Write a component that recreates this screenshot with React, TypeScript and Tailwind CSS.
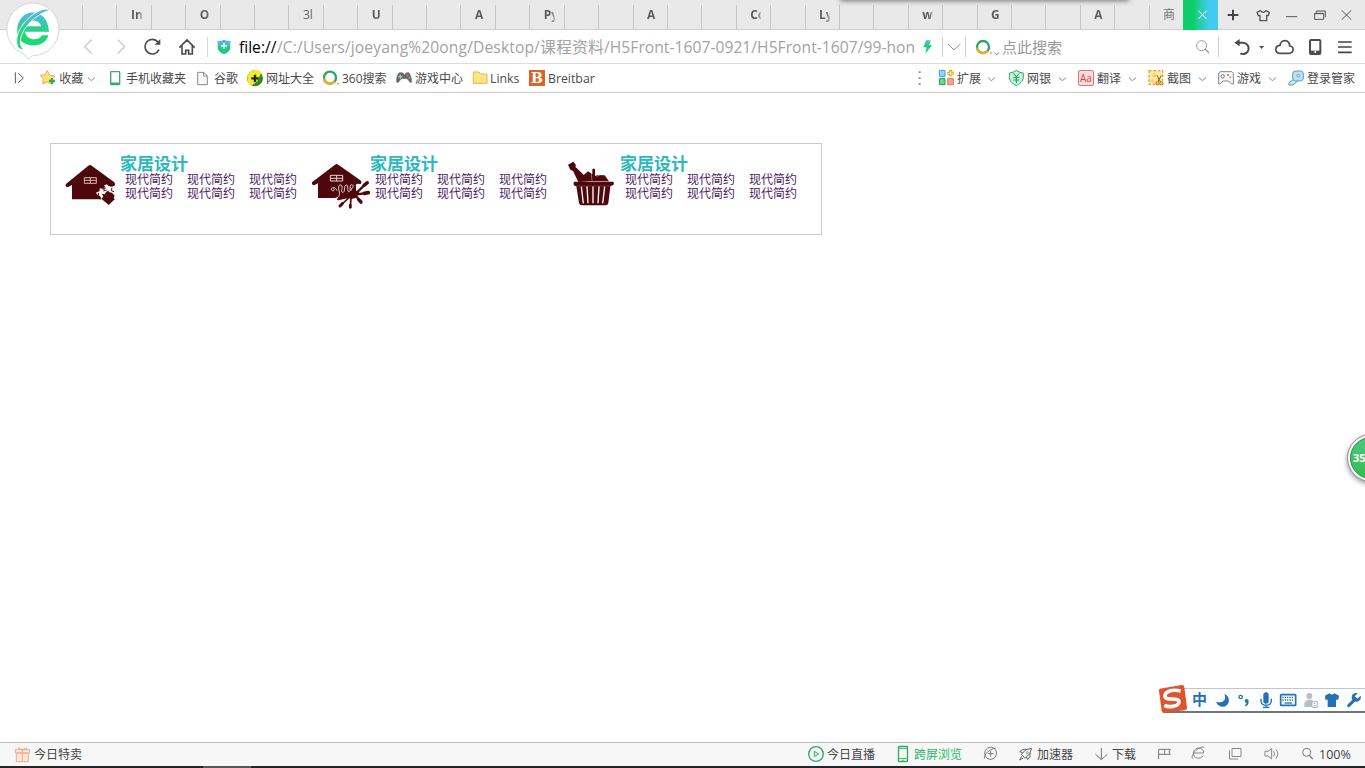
import React from "react";

type ArtProps = { x: number; y: number; w: number; h: number; children: React.ReactNode };

// Artwork is drawn on a grid three times finer than the page.
function Art({ x, y, w, h, children }: ArtProps) {
  return (
    <svg
      className="block shrink-0"
      width={w / 3}
      height={h / 3}
      viewBox={`${x} ${y} ${w} ${h}`}
      fill="none"
      strokeWidth={4}
    >
      {children}
    </svg>
  );
}

const tabLabels: Record<number, string> = {
  1: "In", 3: "O", 6: "3l", 8: "U", 11: "A", 13: "Py", 16: "A",
  19: "Co", 21: "Ly", 24: "w", 26: "G", 29: "A", 31: "商",
};

function TabStrip() {
  return (
    <div className="flex h-[30px] shrink-0 border-b border-[#cfcfcf] bg-[#e9e9e9] pl-[82px]">
      <div className="flex w-[1101px] shrink-0 pt-[5px]">
        {Array.from({ length: 32 }, (_, i) => (
          <div key={i} className="flex min-w-0 flex-1 border-l border-[#c6c6c6] pl-[13.5px]">
            <span
              className={
                i === 31
                  ? "w-[11px] overflow-hidden text-[12px] leading-[20px] whitespace-nowrap text-[#777]"
                  : i === 6
                    ? "w-[10px] overflow-hidden text-[12px] leading-[20px] whitespace-nowrap text-[#666]"
                    : "w-[11px] overflow-hidden bg-linear-to-r from-[#5a5a5a] from-60% to-[#bbb] bg-clip-text text-[12px] leading-[20px] font-bold whitespace-nowrap text-transparent"
              }
            >
              {tabLabels[i] ?? ""}
            </span>
          </div>
        ))}
      </div>
      <div className="h-[30px] w-[35px] shrink-0 bg-linear-to-r from-[#0dcd6b] from-30% to-[#41cbf0] to-75%">
        <Art x={489} y={0} w={105} h={90}>
          <path d="M535 32l25 25M560 32l-25 25" stroke="#fff" strokeWidth={3} />
        </Art>
      </div>
      <Art x={594} y={0} w={88} h={90}>
        <path d="M623 45h32M639 29v32" stroke="#444" strokeWidth={6} />
      </Art>
      <Art x={682} y={0} w={96} h={90}>
        <path d="M712 37l10-5c5 7 12 7 17 0l10 5-3 10-5-1v16h-20V46l-5 1z" stroke="#555" strokeLinejoin="round" />
      </Art>
      <Art x={778} y={0} w={80} h={90}>
        <path d="M799 50h34" stroke="#555" strokeWidth={3} />
      </Art>
      <Art x={858} y={0} w={82} h={90}>
        <path d="M884 40h27v18h-27zM884 41h27M889 38v-5h27v19" stroke="#555" strokeWidth={3} />
      </Art>
      <Art x={940} y={0} w={95} h={90}>
        <path d="M966 31l29 28M995 31l-29 28" stroke="#555" strokeWidth={3} />
      </Art>
    </div>
  );
}

function Ring({ cx, cy, r }: { cx: number; cy: number; r: number }) {
  return (
    <>
      <circle cx={cx} cy={cy} r={r} stroke="#2ba567" strokeWidth={7} />
      <path
        d={`M${cx - r} ${cy + 2}A${r} ${r} 0 0 0 ${cx + r * 0.8} ${cy + r * 0.6}`}
        stroke="#f0aa2c"
        strokeWidth={7}
      />
      <circle cx={cx + r + 6} cy={cy + r} r={3} fill="#f0aa2c" />
    </>
  );
}

function NavBar() {
  return (
    <div className="flex h-[34px] shrink-0 border-b border-[#dcdcdc] bg-white">
      <div className="w-[72px] shrink-0" />
      <Art x={216} y={90} w={96} h={99}>
        <path d="M275 119l-21 21 21 21" stroke="#d3d3d3" strokeWidth={5} />
      </Art>
      <Art x={312} y={90} w={99} h={99}>
        <path d="M353 119l21 21-21 21" stroke="#d3d3d3" strokeWidth={5} />
      </Art>
      <Art x={411} y={90} w={96} h={99}>
        <path d="M477 149a22 22 0 1 1-3-23" stroke="#4c4c4c" strokeWidth={5} />
        <path d="M481 117v17h-17z" fill="#4c4c4c" />
      </Art>
      <Art x={507} y={90} w={114} h={99}>
        <path d="M538 143l23-23 23 23M546 138v24h11v-11h9v11h11v-24" stroke="#4c4c4c" strokeWidth={5} />
      </Art>
      <div className="mt-[7px] h-5 w-px shrink-0 bg-[#d8d8d8]" />
      <Art x={624} y={90} w={93} h={99}>
        <defs>
          <linearGradient id="shield" x1="0" y1="0" x2="0" y2="1">
            <stop offset="0.2" stopColor="#51bce0" />
            <stop offset="0.6" stopColor="#1dcb78" />
          </linearGradient>
        </defs>
        <path d="M653 123q9 1 19-4 10 5 19 4v22q-2 11-19 18-17-7-19-18z" fill="url(#shield)" />
        <path d="M663 138h18M672 129v18" stroke="#fff" strokeWidth={5} />
      </Art>
      <div className="flex w-[676px] shrink-0 overflow-hidden pt-px font-['Open_Sans','Noto_Sans_CJK_SC',sans-serif] text-[15.6px] leading-[33px] whitespace-nowrap text-[#a3a3a3]">
        <span className="w-[38px] shrink-0 text-black">file://</span>
        <span className="w-[263px] shrink-0 tracking-[0.13px]">/C:/Users/joeyang%20ong/Desktop/</span>
        <span className="w-[64px] shrink-0 text-[16px]">课程资料</span>
        <span className="tracking-[0.05px]">/H5Front-1607-0921/H5Front-1607/99-hon</span>
      </div>
      <Art x={705} y={90} w={81} h={99}>
        <defs>
          <linearGradient id="bolt" x1="0" y1="0" x2="0" y2="1">
            <stop offset="0.1" stopColor="#4bbbe7" />
            <stop offset="0.5" stopColor="#19cc6d" />
          </linearGradient>
        </defs>
        <path d="M738 121h14l-4 14h8l-20 26 4-19h-10z" fill="url(#bolt)" />
      </Art>
      <div className="mt-[7px] h-5 w-px shrink-0 bg-[#d0d0d0]" />
      <Art x={789} y={90} w={66} h={99}>
        <path d="M804 132l18 18 19-18" stroke="#999" strokeWidth={3} />
      </Art>
      <div className="mt-[7px] h-5 w-px shrink-0 bg-[#d0d0d0]" />
      <Art x={858} y={90} w={108} h={99}>
        <Ring cx={909} cy={141} r={18} />
        <path d="M943 158l7 6 8-6" stroke="#888" strokeWidth={3} />
      </Art>
      <span className="w-[188px] shrink-0 text-[15px] leading-[35px] text-[#999]">点此搜索</span>
      <Art x={510} y={90} w={84} h={99}>
        <circle cx={545} cy={137} r={15} stroke="#999" strokeWidth={3} />
        <path d="M555 147l12 12" stroke="#999" strokeWidth={4} />
      </Art>
      <div className="mt-[7px] h-5 w-px shrink-0 bg-[#d0d0d0]" />
      <Art x={597} y={90} w={108} h={99}>
        <path d="M649 128h20a17 17 0 1 1-8 32" stroke="#4c4c4c" strokeWidth={6} />
        <path d="M643 128l16-11v22z" fill="#4c4c4c" />
      </Art>
      <Art x={705} y={90} w={45} h={99}>
        <path d="M717 138h16l-8 9z" fill="#555" />
      </Art>
      <Art x={750} y={90} w={90} h={99}>
        <path d="M779 160h29c15-2 15-21 1-22 1-21-28-21-29-2-17 1-16 23-1 24z" stroke="#4c4c4c" strokeWidth={5} />
      </Art>
      <Art x={840} y={90} w={90} h={99}>
        <rect x={870} y={120} width={31} height={42} rx={3} stroke="#4c4c4c" strokeWidth={6} />
        <path d="M870 156h31" stroke="#4c4c4c" strokeWidth={8} />
        <circle cx={886} cy={156} r={3} fill="#fff" />
      </Art>
      <Art x={930} y={90} w={105} h={99}>
        <path d="M954 126h41M954 141h41M954 157h41" stroke="#444" strokeWidth={5} />
      </Art>
    </div>
  );
}

function Mark({ className, children, label }: { className: string; children: React.ReactNode; label: string }) {
  return (
    <div className={className}>
      {children}
      <span>{label}</span>
    </div>
  );
}

function Chevron() {
  return (
    <Art x={258} y={192} w={32} h={84}>
      <path d="M264 233l10 9 11-9" stroke="#888" strokeWidth={3} />
    </Art>
  );
}

function BookmarkBar() {
  return (
    <div className="flex h-[29px] shrink-0 border-b border-[#c8c8c8] bg-white text-[12px] leading-[29px] whitespace-nowrap text-[#4a4a4a]">
      <Art x={0} y={192} w={120} h={84}>
        <path d="M46 217v33M55 220l15 14-15 14" stroke="#555" strokeWidth={3} />
      </Art>
      <div className="flex w-[69px] shrink-0">
        <Art x={120} y={192} w={58} h={84}>
          <path d="M142 212l7 14 16 2-12 11 3 14-14-7-14 6 2-15-9-11 14-2z" fill="#fee078" stroke="#e6ad4e" strokeWidth={3} strokeLinejoin="round" />
          <path d="M147 243h18M156 234v18" stroke="#35a963" strokeWidth={7} />
        </Art>
        <span className="w-[27px]">收藏</span>
        <Chevron />
      </div>
      <Mark className="flex w-[87px] shrink-0" label="手机收藏夹">
        <Art x={327} y={192} w={51} h={84}>
          <rect x={332} y={215} width={27} height={39} rx={2} fill="#fff" stroke="#43a66d" strokeWidth={4} />
          <path d="M332 250h27" stroke="#43a66d" strokeWidth={5} />
        </Art>
      </Mark>
      <Mark className="flex w-[50px] shrink-0" label="谷歌">
        <Art x={588} y={192} w={54} h={84}>
          <path d="M593 217h18l11 11v26h-29zM611 217v11h11" fill="#fafafa" stroke="#888" strokeWidth={3} />
        </Art>
      </Mark>
      <Mark className="flex w-[76px] shrink-0" label="网址大全">
        <Art x={738} y={192} w={60} h={84}>
          <circle cx={765} cy={235} r={24} fill="#2f8a2c" />
          <path d="M742 236c0-28 32-33 42-18l-12 26-18 13c-8-3-12-11-12-21z" fill="#f3ea2a" />
          <path d="M754 235h22M765 224v22" stroke="#202b0e" strokeWidth={7} />
        </Art>
      </Mark>
      <Mark className="flex w-[73px] shrink-0" label="360搜索">
        <Art x={966} y={192} w={60} h={84}>
          <Ring cx={990} cy={233} r={18} />
        </Art>
      </Mark>
      <Mark className="flex w-[76px] shrink-0" label="游戏中心">
        <Art x={165} y={192} w={60} h={84}>
          <path d="M177 218h11l5 6 6-6h8c6 8 11 30 6 30-5 0-8-12-13-12h-14c-6 1-10 14-15 12-4-5 0-24 6-30z" fill="#666" stroke="#888" strokeWidth={2} />
          <path d="M175 230h12M181 224v12" stroke="#8fe0b4" />
          <circle cx={202} cy={226} r={4} fill="#db5757" />
          <circle cx={208} cy={233} r={3} fill="#5ac58c" />
        </Art>
      </Mark>
      <Mark className="flex w-[57px] shrink-0 font-['Open_Sans',sans-serif] text-[12.3px]" label="Links">
        <Art x={394} y={192} w={57} h={84}>
          <path d="M401 250v-34h17l5 6h19v28z" fill="#fee483" stroke="#deb94c" strokeWidth={3} />
        </Art>
      </Mark>
      <Mark className="flex w-[388px] shrink-0 pl-px font-['Open_Sans',sans-serif] text-[12.3px]" label="Breitbar">
        <div className="mt-[6px] mr-[3px] h-4 w-4 shrink-0 bg-[#dd6427] text-center font-['DejaVu_Serif',serif] text-[14px] leading-4 font-bold text-white">B</div>
      </Mark>
      <Art x={708} y={192} w={63} h={84}>
        <path d="M719 214v5M719 232v5M719 250v5" stroke="#888" strokeWidth={6} />
      </Art>
      <div className="flex w-[71px] shrink-0">
        <Art x={771} y={192} w={60} h={84}>
          <path d="M778 211h17v18h-17z" fill="#92d7ff" stroke="#4999cf" strokeWidth={3} />
          <path d="M778 236h17v18h-17z" fill="#65d991" stroke="#239c57" strokeWidth={3} />
          <path d="M803 236h17v18h-17z" fill="#f9a58d" stroke="#d87962" strokeWidth={3} />
          <path d="M802 220h19M812 210v19" stroke="#d8a025" strokeWidth={9} />
          <path d="M804 220h15M812 213v14" stroke="#ffe25f" strokeWidth={4} />
        </Art>
        <span className="w-[29px]">扩展</span>
        <Chevron />
      </div>
      <div className="flex w-[70px] shrink-0">
        <Art x={984} y={192} w={57} h={84}>
          <path d="M988 219q11 0 21-8 11 8 21 8v13c0 12-12 20-21 25-10-5-21-13-21-25z" fill="#c5f4da" stroke="#37a570" strokeWidth={3} />
          <path d="M1001 220l8 10 9-10M1009 230v19M1000 232h18M1000 240h18" stroke="#24945b" strokeWidth={3} />
        </Art>
        <span className="w-[30px]">网银</span>
        <Chevron />
      </div>
      <div className="flex w-[70px] shrink-0">
        <div className="mt-[6px] mr-[3px] h-4 w-4 rounded-[2px] border border-[#cd7979] bg-[#ffdbdb] text-center text-[10px] leading-[14px] text-[#cb4848]">Aa</div>
        <span className="w-[30px]">翻译</span>
        <Chevron />
      </div>
      <div className="flex w-[70px] shrink-0">
        <Art x={384} y={192} w={57} h={84}>
          <path d="M387 212h41v41h-41z" fill="#fee99f" stroke="#d8a343" strokeWidth={4} strokeDasharray="8 5" />
          <circle cx={403} cy={226} r={6} fill="#fcd168" />
          <circle cx={397} cy={243} r={5} fill="#fcd168" />
          <path d="M411 226l11 21M424 226l-11 21" stroke="#735c4e" strokeWidth={3} />
          <circle cx={412} cy={250} r={5} fill="#ffc44e" stroke="#c97a21" strokeWidth={3} />
          <circle cx={424} cy={250} r={5} fill="#ffc44e" stroke="#c97a21" strokeWidth={3} />
        </Art>
        <span className="w-[30px]">截图</span>
        <Chevron />
      </div>
      <div className="flex w-[70px] shrink-0">
        <Art x={594} y={192} w={57} h={84}>
          <path d="M596 252v-33l4-4h36l4 4v33h-5l-9-9h-17l-9 9z" fill="#f8f8f8" stroke="#888" strokeWidth={3} />
          <circle cx={608} cy={229} r={5} stroke="#777" strokeWidth={3} />
          <circle cx={624} cy={225} r={3} fill="#db5757" />
          <circle cx={631} cy={232} r={3} fill="#e09b3d" />
        </Art>
        <span className="w-[30px]">游戏</span>
        <Chevron />
      </div>
      <Mark className="flex shrink-0" label="登录管家">
        <Art x={804} y={192} w={57} h={84}>
          <path d="M823 236l-16 12v7h12l15-13" fill="#c8e9fd" stroke="#5d99c1" strokeWidth={3} />
          <rect x={818} y={213} width={32} height={30} rx={9} fill="#b8e2fd" stroke="#5d99c1" strokeWidth={3} />
          <circle cx={835} cy={227} r={4} fill="#fff" stroke="#5d99c1" strokeWidth={3} />
        </Art>
      </Mark>
    </div>
  );
}

function HousePuzzle() {
  return (
    <Art x={33} y={27} w={210} h={210}>
      <path d="M145 92q5-4 10 0l67 49q6 5 2 11l-10 3-10-3-3-4-8 3-2 11-12-2v9l-10 3 1 8 10 3 5 10H96v-43l-13 7q-8-1-6-9z" fill="#4e080c" />
      <path d="M133 128h36v17h-36zM151 128v17M133 136h36" stroke="#d8b6b8" strokeWidth={3} />
      <path d="M185 176l9 2 5-8q6-5 9 2l8 1 8 9-3 8 4 2-19 18-21-18 5-8z" fill="#4e080c" />
      <path d="M166 181h9v-8M170 177v10h9l2 6M188 163l7-1-1-9M190 168l10-3M216 158l-2 9 8 3" stroke="#4e080c" strokeWidth={3} />
    </Art>
  );
}

function HousePaint() {
  return (
    <Art x={3} y={27} w={210} h={210}>
      <path d="M105 89q5-4 10 0l66 47q6 6 1 11l-12-1-5 9-1 18-12 16H54v-44l-12 6q-8-1-6-9z" fill="#4e080c" />
      <path
        d="M91 121h37v17H91zM110 121v17M91 130h37M107 189c12-1 13-11 10-22-5-17 6-22 9-13 2 9-6 16 2 18 9 1 2-21 11-22 8 0 1 20 7 20 9 0 0-21 9-21 8 1 4 12-2 13 1 12 8 7 12 3M111 167c-6-17-25-6-14 0 5 2 8-3 3-7"
        stroke="#e6d2d3"
        strokeWidth={3}
      />
      <path d="M165 151v18q4 7 12 3" stroke="#4e080c" strokeWidth={6} />
      <g stroke="#4e080c" strokeLinecap="round">
        <path d="M168 175l32-31" strokeWidth={7} />
        <path d="M192 151l10-8" strokeWidth={10} />
        <path d="M172 178l33-5" strokeWidth={7} />
        <path d="M193 175l12-2" strokeWidth={11} />
        <path d="M168 183l15 19" strokeWidth={7} />
        <path d="M176 194l7 7" strokeWidth={10} />
        <path d="M153 188l-2 29" strokeWidth={5} />
        <path d="M151 210v7" strokeWidth={8} />
        <path d="M146 189l-25 23" strokeWidth={5} />
        <path d="M127 206l-7 7" strokeWidth={9} />
        <path d="M150 185l-36 8" strokeWidth={6} />
      </g>
      <path d="M144 187l7-19 13-5 13 11-9 14-15 5z" fill="#4e080c" />
    </Art>
  );
}

function Basket() {
  return (
    <Art x={-27} y={27} w={210} h={210}>
      <path d="M24 89l16-9 8 10-2 5 28 27 10 17-29 2-16-33-8-4z" fill="#4e080c" />
      <path d="M72 119l12-10 13 9v-15q4-5 8 0v20l9-3 20 1 13 18H60z" fill="#4e080c" />
      <path d="M42 140h118q4 8-2 11l-7 3-6 50q-1 7-8 7H66q-8 0-9-7l-8-50q-12-3-7-14z" fill="#4e080c" />
      <path d="M64 155l6 50M81 154l3 51M99 154v51M117 154l-3 51M134 155l-6 50" stroke="#fff" strokeWidth={4} />
      <path d="M94 117l2 20M109 124l12-4" stroke="#b79c9e" strokeWidth={2} />
      <path d="M48 153h103" stroke="#74464a" strokeWidth={2} />
    </Art>
  );
}

function Category({ icon }: { icon: React.ReactNode }) {
  return (
    <div className="flex w-[250px] shrink-0 whitespace-nowrap">
      {icon}
      <div className="-ml-px pt-[10px]">
        <h2 className="text-[17px] leading-[19px] font-bold text-[#2bb9bd]">家居设计</h2>
        <div className="grid grid-cols-[62px_62px_62px] pl-[5px] text-[12px] leading-[14px] text-[#4b205e]">
          {Array.from({ length: 6 }, (_, i) => (
            <span key={i}>现代简约</span>
          ))}
        </div>
      </div>
    </div>
  );
}

function StatusBar() {
  return (
    <div className="flex h-[26px] shrink-0 border-t border-b-2 border-t-[#bdbdbd] border-b-[#252527] bg-[#f7f7f7] text-[12px] leading-[23px] whitespace-nowrap text-[#454545]">
      <Art x={0} y={24} w={102} h={69}>
        <path d="M46 44h43v10H46zM49 54h36v26H49zM67 44v36M67 44c-18-1-13-9-6-3l6 3 8-4c8-3 7 5-8 4" stroke="#eab08e" strokeWidth={3} fill="#fce8da" />
      </Art>
      <span className="w-[772px] shrink-0">今日特卖</span>
      <Art x={78} y={24} w={63} h={69}>
        <circle cx={108} cy={57} r={22} stroke="#28ae61" strokeWidth={4} />
        <path d="M103 49v16l13-8z" stroke="#28ae61" strokeWidth={3} />
      </Art>
      <span className="w-[69px]">今日直播</span>
      <Art x={348} y={24} w={54} h={69}>
        <rect x={355.5} y={34.5} width={27} height={45} rx={2} stroke="#28ae61" strokeWidth={4} />
        <path d="M356 40.5h26M356 70.5h26M366 75.5h6" stroke="#28ae61" strokeWidth={2.5} />
      </Art>
      <span className="w-[66px] text-[#28b867]">跨屏浏览</span>
      <Art x={600} y={24} w={60} h={69}>
        <path d="M622 40c14-10 31 4 27 19-4 16-26 19-32 5" stroke="#777" strokeWidth={3} />
        <path d="M613 71c0-15 13-27 34-32M617 64c-5-9-3-19 5-24M632 48v17M624 56h16" stroke="#777" strokeWidth={3} />
      </Art>
      <div className="w-4" />
      <Art x={708} y={24} w={63} h={69}>
        <path d="M755 40l-17 4-14 14 11 12 14-14 6-16zM728 53l-9-3 10-7h9M739 66l4 8 7-9V54M725 64l-6 11 11-6" stroke="#666" strokeWidth={3} />
        <circle cx={742} cy={53} r={3} stroke="#777" strokeWidth={2} />
      </Art>
      <span className="w-[55px]">加速器</span>
      <Art x={936} y={24} w={60} h={69}>
        <path d="M964 39v35M946 57l18 17 19-17" stroke="#777" strokeWidth={3} />
      </Art>
      <span className="w-[43px]">下载</span>
      <Art x={30} y={189} w={102} h={69}>
        <path d="M41 237v-29h18v15H41M59 208h17l-4 8 4 7H59" stroke="#777" strokeWidth={3} />
      </Art>
      <Art x={132} y={189} w={105} h={69}>
        <path d="M146 219h30c0-20-28-20-31-1-2 19 22 21 30 9M143 236c-9-8 19-41 35-34" stroke="#888" strokeWidth={3} />
      </Art>
      <Art x={237} y={189} w={108} h={69}>
        <path d="M261 205.5h27v24h-27zM253.5 211v26h26" stroke="#888" strokeWidth={3} />
      </Art>
      <Art x={345} y={189} w={114} h={69}>
        <path d="M360 214h9l11-8v31l-11-9h-9zM386 214q6 7 0 15M393 209q11 12 0 26" stroke="#888" strokeWidth={3} />
      </Art>
      <Art x={459} y={189} w={63} h={69}>
        <circle cx={485} cy={217} r={12} stroke="#777" strokeWidth={3} />
        <path d="M493 226l10 11" stroke="#777" />
      </Art>
      <span className="font-['Open_Sans',sans-serif] text-[12.5px]">100%</span>
    </div>
  );
}

function BrowserLogo() {
  return (
    <div className="absolute top-0 left-0">
      <Art x={0} y={0} w={195} h={189}>
        <defs>
          <linearGradient id="logo" x1="0" y1="0" x2="0" y2="1">
            <stop offset="0" stopColor="#53b9e8" />
            <stop offset="0.65" stopColor="#1ed874" />
          </linearGradient>
        </defs>
        <path d="M99 9a79 79 0 1 1-2 158l-13 11-12-16A79 79 0 0 1 99 9z" fill="#fff" stroke="#d7d7d7" strokeWidth={3} />
        <path d="M147 95H75c3 27 42 29 51 11h19c-10 42-79 40-92 0C40 22 144 11 147 95zM76 79h47c-4-24-43-21-47 0z" fill="url(#logo)" fillRule="evenodd" />
        <path d="M151 31C123 11 45 76 50 128c1 18 13 22 21 20-34-28 23-105 80-117z" fill="url(#logo)" stroke="#fff" strokeWidth={3} />
      </Art>
    </div>
  );
}

function InputMethodBar() {
  return (
    <div className="absolute top-[684px] right-0 flex h-[30px] w-[208px]">
      <div className="absolute top-[4px] right-0 h-[25px] w-[202px] border-t border-b-2 border-t-[#c3c5ca] border-b-[#6f747d] bg-[#fcfeff]" />
      <div className="relative flex">
        <Art x={36} y={12} w={102} h={90}>
          <path d="M44 26l66-11q7-1 8 6l8 61q1 7-7 9l-62 7q-6 0-7-6l-8-59q0-6 2-7z" fill="#de542e" />
          <path d="M107 33C77 26 54 38 61 52c5 10 42-1 41 14-1 16-34 16-44 10" stroke="#fff" strokeWidth={11} />
        </Art>
        <span className="w-[23px] pl-[1px] text-[15px] leading-[31px] font-bold text-[#2670b3]">中</span>
        <Art x={207} y={12} w={63} h={90}>
          <path d="M238 42c8 16-3 29-25 24 6 15 23 19 33 9 11-11 5-29-8-33z" fill="#2670b3" />
        </Art>
        <Art x={270} y={12} w={66} h={90}>
          <circle cx={287} cy={51} r={5} stroke="#2670b3" strokeWidth={4} />
          <circle cx={305} cy={63} r={6} fill="#2670b3" />
          <path d="M308 65q0 9-7 12" stroke="#2670b3" strokeWidth={5} />
        </Art>
        <Art x={336} y={12} w={63} h={90}>
          <rect x={355} y={37} width={16} height={34} rx={8} fill="#2670b3" />
          <path d="M348 56v7c1 17 30 17 31 0v-7M363 74v9M354 82h19" stroke="#2670b3" strokeWidth={4} />
        </Art>
        <Art x={399} y={12} w={72} h={90}>
          <rect x={407} y={44} width={45} height={32} rx={2} stroke="#2670b3" strokeWidth={5} />
          <path d="M412 52h35M412 60h35" stroke="#2670b3" strokeWidth={4} strokeDasharray="4 3" />
          <path d="M419 69h22" stroke="#2670b3" strokeWidth={4} />
        </Art>
        <Art x={471} y={12} w={60} h={90}>
          <circle cx={493} cy={48} r={9} fill="#b8bdc9" />
          <path d="M478 81V69l9-10h13l7 7v15z" fill="#b8bdc9" />
          <path d="M501 65h16v17h-16z" fill="#fff" stroke="#aab0bc" strokeWidth={3} />
          <path d="M509 69v3M509 75v3" stroke="#999" />
        </Art>
        <Art x={531} y={12} w={66} h={90}>
          <path d="M540 47l13-7c5 5 11 5 15 0l14 7-2 12h-7v22h-25V59h-7z" fill="#2670b3" />
        </Art>
        <Art x={597} y={12} w={63} h={90}>
          <path d="M611 77l19-19" stroke="#2670b3" strokeWidth={9} strokeLinecap="round" />
          <path d="M638 40c-15-4-23 12-14 21 10 10 27 1 23-14l-10 9-8-7z" fill="#2670b3" />
        </Art>
      </div>
    </div>
  );
}

export default function App() {
  return (
    <div className="relative flex h-[768px] w-[1365px] flex-col overflow-hidden bg-white font-['Open_Sans','Noto_Sans_CJK_SC',sans-serif]">
      <TabStrip />
      <NavBar />
      <BookmarkBar />
      <main className="flex-1 pt-[50px] pl-[50px]">
        <section className="flex h-[92px] w-[772px] border border-[#cacaca]">
          <Category icon={<HousePuzzle />} />
          <Category icon={<HousePaint />} />
          <Category icon={<Basket />} />
        </section>
      </main>
      <StatusBar />
      <div className="absolute bottom-0 left-[203px] h-[2px] w-[48px] bg-[#59595b]" />
      <div className="absolute -top-[6px] left-[840px] h-[6px] w-[289px] shadow-[0_1px_5px_#777]" />
      <BrowserLogo />
      <InputMethodBar />
      <div className="absolute top-[434px] left-[1347px] h-[48px] w-[48px] rounded-full border border-[#929292] bg-white p-[2px] shadow-[0_2px_5px_#999]">
        <div className="h-full w-full rounded-full border border-[#248d4a] bg-linear-to-b from-[#4fc780] to-[#31bd4e] pl-[2px] text-[11px] leading-[40px] font-bold text-white">35</div>
      </div>
    </div>
  );
}
